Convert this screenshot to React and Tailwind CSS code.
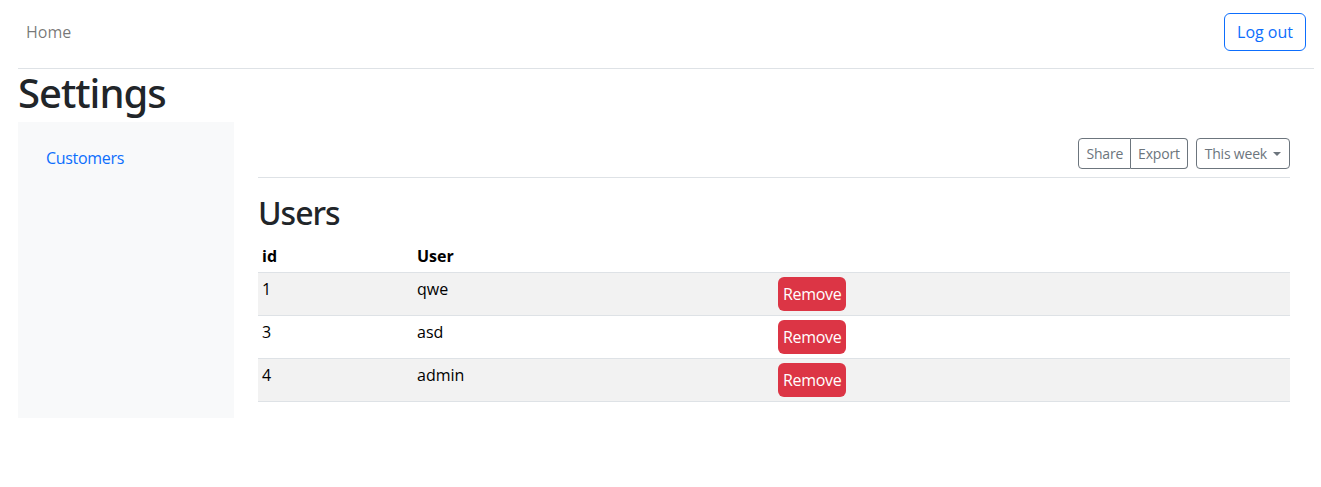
import React from "react";

const users = [
  { id: 1, name: "qwe" },
  { id: 3, name: "asd" },
  { id: 4, name: "admin" },
];

export default function App() {
  return (
    <div className="font-['Open_Sans','Noto_Sans',sans-serif] text-[16px] leading-[24px] text-[#212529] bg-white min-h-[487px]">
      <nav className="ml-[18px] mr-[7px] h-[69px] pt-[13px] border-b border-[#dee2e6] flex items-start justify-between px-[8px]">
        <div className="h-[38px] flex items-center">
          <a className="text-[rgba(0,0,0,0.55)]">Home</a>
        </div>
        <button className="h-[38px] px-[12px] border border-[#0d6efd] text-[#0d6efd] rounded-[6px]">
          Log out
        </button>
      </nav>
      <h1 className="ml-[18px] mr-[7px] font-['Noto_Sans','Open_Sans',sans-serif] text-[40px] leading-[48px] font-medium tracking-[-1px] mb-[5px]">Settings</h1>
      <div className="ml-[18px] mr-[7px] flex">
        <aside className="w-[216px] bg-[#f8f9fa] pt-[16px] shrink-0">
          <div className="py-[8px] pl-[28px]">
            <a className="text-[#0d6efd] tracking-[-0.3px]">Customers</a>
          </div>
        </aside>
        <main className="flex-1 px-[24px]">
          <div className="flex justify-end items-center pt-[16px] pb-[8px] mb-[16px] border-b border-[#dee2e6]">
            <div className="flex mr-[8px]">
              <button className="h-[31px] px-[7px] text-[14px] leading-[21px] text-[#6c757d] border border-[#6c757d] rounded-l-[4px] tracking-[-0.2px]">
                Share
              </button>
              <button className="h-[31px] px-[7px] text-[14px] leading-[21px] text-[#6c757d] border border-l-0 border-[#6c757d] rounded-r-[4px] tracking-[-0.2px]">
                Export
              </button>
            </div>
            <button className="h-[31px] px-[8px] text-[14px] leading-[21px] text-[#6c757d] border border-[#6c757d] rounded-[4px] flex items-center tracking-[-0.2px]">
              This week
              <span className="ml-[6px] w-0 h-0 border-t-[4px] border-t-[#6c757d] border-x-[4px] border-x-transparent"></span>
            </button>
          </div>
          <h2 className="font-['Noto_Sans','Open_Sans',sans-serif] text-[32px] leading-[38px] font-medium tracking-[-1px] mb-[8px]">Users</h2>
          <table className="w-full mb-[16px] border-collapse text-black">
            <thead>
              <tr className="border-b border-[#dee2e6]">
                <th className="w-[155px] text-left font-bold p-[4px] align-top">id</th>
                <th className="w-[361px] text-left font-bold p-[4px] align-top">User</th>
                <th className="p-[4px]"></th>
              </tr>
            </thead>
            <tbody>
              {users.map((u, i) => (
                <tr key={u.id} className={"border-b border-[#dee2e6] " + (i % 2 === 0 ? "bg-[#f2f2f2]" : "bg-white")}>
                  <td className="p-[4px] align-top">{u.id}</td>
                  <td className="p-[4px] align-top">{u.name}</td>
                  <td className="p-[4px] align-top">
                    <button className="h-[34px] px-[5px] bg-[#dc3545] text-white rounded-[6px] text-[16px] tracking-[-0.3px]">
                      Remove
                    </button>
                  </td>
                </tr>
              ))}
            </tbody>
          </table>
        </main>
      </div>
    </div>
  );
}
